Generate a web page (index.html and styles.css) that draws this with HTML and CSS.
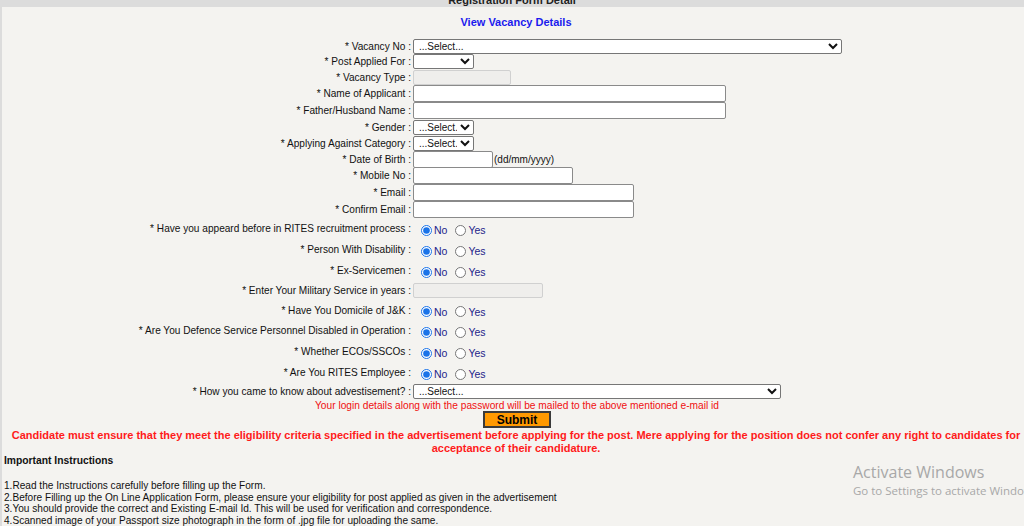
FILE: index.html
```html
<!DOCTYPE html>
<html>
<head>
<meta charset="utf-8">
<title>Registration Form Detail</title>
<link rel="stylesheet" href="styles.css">
</head>
<body>
<div class="page">
  <div class="titlebar"><span>Registration Form Detail</span></div>
  <div class="content">
    <div class="vacancy-link"><a href="#">View Vacancy Details</a></div>
    <form class="form">
      <label class="lbl">* Vacancy No :</label>
      <div class="fld"><select class="sel sel-vacancy"><option>...Select...</option></select></div>

      <label class="lbl">* Post Applied For :</label>
      <div class="fld"><select class="sel sel-small"><option></option></select></div>

      <label class="lbl">* Vacancy Type :</label>
      <div class="fld"><input class="txt txt-disabled w-type" disabled></div>

      <label class="lbl">* Name of Applicant :</label>
      <div class="fld"><input class="txt w-name"></div>

      <label class="lbl">* Father/Husband Name :</label>
      <div class="fld"><input class="txt w-name"></div>

      <label class="lbl">* Gender :</label>
      <div class="fld"><select class="sel sel-small"><option>...Select..</option></select></div>

      <label class="lbl">* Applying Against Category :</label>
      <div class="fld"><select class="sel sel-small"><option>...Select..</option></select></div>

      <label class="lbl">* Date of Birth :</label>
      <div class="fld"><input class="txt w-dob"><span class="hint">(dd/mm/yyyy)</span></div>

      <label class="lbl">* Mobile No :</label>
      <div class="fld"><input class="txt w-mobile"></div>

      <label class="lbl">* Email :</label>
      <div class="fld"><input class="txt w-email"></div>

      <label class="lbl">* Confirm Email :</label>
      <div class="fld"><input class="txt w-email"></div>

      <label class="lbl lbl-r">* Have you appeard before in RITES recruitment process :</label>
      <div class="fld radios"><input type="radio" name="q1" checked><span>No</span><input type="radio" name="q1"><span>Yes</span></div>

      <label class="lbl lbl-r">* Person With Disability :</label>
      <div class="fld radios"><input type="radio" name="q2" checked><span>No</span><input type="radio" name="q2"><span>Yes</span></div>

      <label class="lbl lbl-r">* Ex-Servicemen :</label>
      <div class="fld radios"><input type="radio" name="q3" checked><span>No</span><input type="radio" name="q3"><span>Yes</span></div>

      <label class="lbl lbl-r">* Enter Your Military Service in years :</label>
      <div class="fld"><input class="txt txt-disabled w-mil" disabled></div>

      <label class="lbl lbl-r">* Have You Domicile of J&amp;K :</label>
      <div class="fld radios"><input type="radio" name="q4" checked><span>No</span><input type="radio" name="q4"><span>Yes</span></div>

      <label class="lbl lbl-r">* Are You Defence Service Personnel Disabled in Operation :</label>
      <div class="fld radios"><input type="radio" name="q5" checked><span>No</span><input type="radio" name="q5"><span>Yes</span></div>

      <label class="lbl lbl-r">* Whether ECOs/SSCOs :</label>
      <div class="fld radios"><input type="radio" name="q6" checked><span>No</span><input type="radio" name="q6"><span>Yes</span></div>

      <label class="lbl lbl-r">* Are You RITES Employee :</label>
      <div class="fld radios"><input type="radio" name="q7" checked><span>No</span><input type="radio" name="q7"><span>Yes</span></div>

      <label class="lbl">* How you came to know about advestisement? :</label>
      <div class="fld"><select class="sel sel-how"><option>...Select...</option></select></div>
    </form>
    <p class="mail-note">Your login details along with the password will be mailed to the above mentioned e-mail id</p>
    <div class="submit-wrap"><button class="submit" type="button">Submit</button></div>
    <p class="warning">Candidate must ensure that they meet the eligibility criteria specified in the advertisement before applying for the post. Mere applying for the position does not confer any right to candidates for acceptance of their candidature.</p>
    <h4 class="instr-title">Important Instructions</h4>
    <div class="instr">
      <div>1.Read the Instructions carefully before filling up the Form.</div>
      <div>2.Before Filling up the On Line Application Form, please ensure your eligibility for post applied as given in the advertisement</div>
      <div>3.You should provide the correct and Existing E-mail Id. This will be used for verification and correspondence.</div>
      <div>4.Scanned image of your Passport size photograph in the form of .jpg file for uploading the same.</div>
    </div>
  </div>
  <div class="watermark">
    <div class="wm-title">Activate Windows</div>
    <div class="wm-sub">Go to Settings to activate Windows.</div>
  </div>
</div>
</body>
</html>
```

FILE: styles.css
```css
html, body {
  margin: 0;
  padding: 0;
  background: #f4f3f0;
  overflow: hidden;
}
body {
  font-family: "Liberation Sans", Arial, sans-serif;
  font-size: 10px;
  color: #111;
  width: 1024px;
  height: 526px;
}
.page {
  position: relative;
  height: 526px;
  overflow: hidden;
}
.titlebar {
  height: 7px;
  background: #dcdcdc;
  overflow: hidden;
  text-align: center;
  line-height: 1px;
  font-weight: bold;
  font-size: 11px;
  color: #222;
}
.content {
  border-left: 2px solid #dcdcdc;
  height: 519px;
  box-sizing: border-box;
}
.vacancy-link {
  text-align: center;
  padding-top: 9px;
  height: 12px;
  line-height: 12px;
  margin-bottom: 11px;
  padding-left: 6px;
}
.vacancy-link a {
  color: #1a1aee;
  font-weight: bold;
  font-size: 11px;
  text-decoration: none;
}
.form {
  display: grid;
  grid-template-columns: 409px 1fr;
  grid-template-rows: 15px 15px 16px 17px 17px 16px 16px 16px 17px 17px 17px 21px 21px 21px 19px 20px 21px 21px 21px 17px;
  margin: 0;
}
.lbl {
  text-align: right;
  align-self: center;
  white-space: nowrap;
  color: #111;
  font-size: 10.1px;
}
.lbl-r {
  padding-right: 0;
}
.fld {
  display: flex;
  align-items: center;
  padding-left: 2px;
}
.sel {
  font-family: "Liberation Sans", Arial, sans-serif;
  font-size: 10px;
  height: 15px;
  padding: 0 0 0 1px;
  border: 1px solid #767676;
  border-radius: 2px;
  background-color: #fff;
  color: #111;
  box-sizing: border-box;
}
.sel-vacancy { width: 429px; }
.sel-small { width: 61px; }
.sel-how { width: 368px; }
.txt {
  height: 17px;
  box-sizing: border-box;
  border: 1px solid #8a8a8a;
  border-radius: 2px;
  background: #fff;
  padding: 0 2px;
  margin: 0;
  font-size: 10px;
}
.txt-disabled {
  height: 15px;
  background: #efeeec;
  border-color: #d0d0d0;
}
.w-type { width: 98px; }
.w-name { width: 313px; }
.w-dob { width: 80px; }
.w-mobile { width: 160px; }
.w-email { width: 221px; }
.w-mil { width: 130px; }
.hint {
  margin-left: 1px;
}
.radios {
  padding-left: 10px;
  padding-top: 3px;
}
.radios input {
  width: 11px;
  height: 11px;
  margin: 0 2px 0 0;
  accent-color: #1a73e8;
}
.radios span {
  color: #23238a;
  font-size: 10.5px;
  margin-right: 8px;
}
.mail-note {
  margin: 0;
  height: 11px;
  line-height: 11px;
  text-align: center;
  color: #f01010;
  padding-left: 8px;
  font-size: 10.2px;
}
.submit-wrap {
  text-align: center;
  height: 18px;
  padding-left: 8px;
}
.submit {
  width: 68px;
  height: 17px;
  padding: 0;
  background: #ff9900;
  border: 2px solid #3a3a3a;
  font-family: "Liberation Sans", Arial, sans-serif;
  font-weight: bold;
  font-size: 12px;
  color: #000;
  line-height: 12px;
}
.warning {
  margin: 0;
  text-align: center;
  color: #ff1a1a;
  font-weight: bold;
  font-size: 11px;
  line-height: 13px;
  padding: 0 0 0 6px;
}
.instr-title {
  margin: 0 0 13px 0;
  font-size: 10.3px;
  line-height: 12px;
  padding-left: 2px;
  color: #111;
}
.instr {
  padding-left: 2px;
  line-height: 11.7px;
  color: #111;
  font-size: 10.1px;
}
.watermark {
  position: absolute;
  left: 853px;
  top: 462px;
  color: #a8a8a8;
  font-family: "Open Sans", "Noto Sans", sans-serif;
  white-space: nowrap;
}
.wm-title {
  font-size: 16px;
  line-height: 20px;
}
.wm-sub {
  font-size: 11.5px;
  line-height: 18px;
}
```
